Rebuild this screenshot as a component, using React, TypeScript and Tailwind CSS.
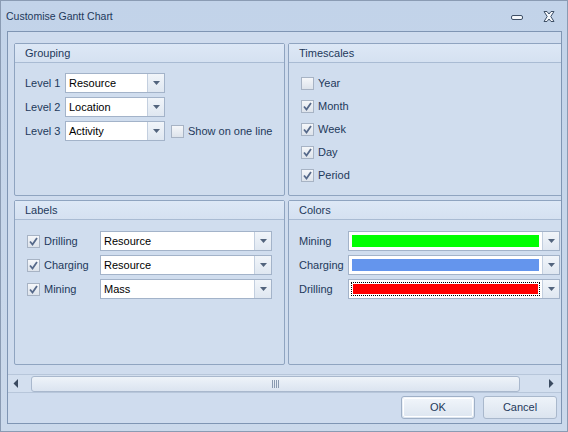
import React from "react";

const FONT = { fontFamily: '"Liberation Sans", Arial, sans-serif' };

function Arrow() {
  return (
    <svg width="7" height="4" viewBox="0 0 7 4">
      <path d="M0 0 H7 L3.5 4 Z" fill="#52647d" />
    </svg>
  );
}

function DropBtn() {
  return (
    <div className="w-[17px] h-full flex items-center justify-center border-l border-[#c3cfdf] bg-gradient-to-b from-[#f1f5fa] to-[#dfe7f1]">
      <Arrow />
    </div>
  );
}

function Combo({ text, w }: { text: string; w: string }) {
  return (
    <div className={`${w} h-[20px] flex border border-[#a3b3c9] bg-white`}>
      <div className="flex-1 flex items-center pl-[3px] text-[11px] text-black">{text}</div>
      <DropBtn />
    </div>
  );
}

function Check({ checked }: { checked: boolean }) {
  return (
    <div className="w-[13px] h-[13px] border border-[#a7b3c4] bg-gradient-to-b from-[#f5f7fa] to-[#dde3eb] flex items-center justify-center">
      {checked && (
        <svg width="9" height="9" viewBox="0 0 9 9">
          <path d="M1 4.5 L3.5 7.5 L8 1" fill="none" stroke="#56698a" strokeWidth="1.8" />
        </svg>
      )}
    </div>
  );
}

function GroupBox({ title, className, children }: { title: string; className: string; children?: React.ReactNode }) {
  return (
    <div className={`${className} border border-[#8fa4c0] rounded-[2px] bg-[#d0ddee] flex flex-col shrink-0`}>
      <div className="h-[19px] border-b border-[#a9bbd3] bg-gradient-to-b from-[#dde8f6] to-[#d5e1f1] flex items-center pl-[10px] text-[11px] text-[#1e395b]">
        {title}
      </div>
      {children}
    </div>
  );
}

function ColorCombo({ color, focused }: { color: string; focused?: boolean }) {
  return (
    <div className="w-[212px] h-[20px] flex border border-[#a3b3c9] bg-white shrink-0">
      <div className="flex-1 p-[2px]">
        <div className={`w-full h-full p-[1px] ${focused ? "border border-dotted border-black" : ""}`}>
          <div className="w-full h-full" style={{ background: color }} />
        </div>
      </div>
      <DropBtn />
    </div>
  );
}

export default function App() {
  const labelCls = "text-[11px] text-[#1e395b]";
  return (
    <div className="w-[568px] h-[432px] bg-gradient-to-b from-[#c2d3e9] to-[#cbd9eb] border border-[#8a9bb3] flex flex-col overflow-hidden" style={FONT}>
      {/* title bar */}
      <div className="h-[30px] shrink-0 flex items-center pl-[5px] pr-[12px]">
        <div className="text-[10.5px] text-[#1e395b] flex-1 pt-[2px]">Customise Gantt Chart</div>
        <svg width="12" height="6" viewBox="0 0 12 6" className="mr-[20px] mt-[3px]">
          <rect x="0.5" y="0.5" width="11" height="4" rx="1.5" fill="#f4f7fb" stroke="#3e4f66" />
        </svg>
        <svg width="12" height="11" viewBox="0 0 12 11">
          <path d="M1 0.5 H4 L6 3 L8 0.5 H11 L7.8 5.5 L11 10.5 H8 L6 8 L4 10.5 H1 L4.2 5.5 Z" fill="#f4f7fb" stroke="#3e4f66" strokeWidth="1" strokeLinejoin="round" />
        </svg>
      </div>
      {/* inner frame */}
      <div className="ml-[6px] mr-[5px] h-[393px] border border-[#7f95b3] bg-[#cfdcee] flex flex-col">
        {/* viewport */}
        <div className="h-[342px] overflow-hidden pt-[11px] pl-[6px] flex flex-col gap-[4px]">
          <div className="flex gap-[3px]">
            <GroupBox title="Grouping" className="w-[271px] h-[153px]">
              <div className="flex flex-col gap-[4px] pt-[10px] pl-[10px]">
                {[
                  ["Level 1", "Resource"],
                  ["Level 2", "Location"],
                  ["Level 3", "Activity"],
                ].map(([l, v], i) => (
                  <div key={l} className="flex items-center h-[20px]">
                    <div className={`${labelCls} w-[40px]`}>{l}</div>
                    <Combo text={v} w="w-[100px]" />
                    {i === 2 && (
                      <div className="flex items-center ml-[6px] gap-[4px]">
                        <Check checked={false} />
                        <span className={labelCls}>Show on one line</span>
                      </div>
                    )}
                  </div>
                ))}
              </div>
            </GroupBox>
            <GroupBox title="Timescales" className="w-[290px] h-[153px] ">
              <div className="flex flex-col gap-[10px] pt-[14px] pl-[12px]">
                {[
                  ["Year", false],
                  ["Month", true],
                  ["Week", true],
                  ["Day", true],
                  ["Period", true],
                ].map(([l, c]) => (
                  <div key={l as string} className="flex items-center h-[13px] gap-[4px]">
                    <Check checked={c as boolean} />
                    <span className={labelCls}>{l as string}</span>
                  </div>
                ))}
              </div>
            </GroupBox>
          </div>
          <div className="flex gap-[3px]">
            <GroupBox title="Labels" className="w-[271px] h-[165px]">
              <div className="flex flex-col gap-[4px] pt-[11px] pl-[12px]">
                {[
                  ["Drilling", "Resource"],
                  ["Charging", "Resource"],
                  ["Mining", "Mass"],
                ].map(([l, v]) => (
                  <div key={l} className="flex items-center h-[20px]">
                    <div className="w-[73px] flex items-center gap-[4px]">
                      <Check checked={true} />
                      <span className={labelCls}>{l}</span>
                    </div>
                    <Combo text={v} w="w-[172px]" />
                  </div>
                ))}
              </div>
            </GroupBox>
            <GroupBox title="Colors" className="w-[290px] h-[165px]">
              <div className="flex flex-col gap-[4px] pt-[11px] pl-[10px]">
                {[
                  ["Mining", "#00ff00", false],
                  ["Charging", "#6495ed", false],
                  ["Drilling", "#ff0000", true],
                ].map(([l, c, f]) => (
                  <div key={l as string} className="flex items-center h-[20px]">
                    <div className={`${labelCls} w-[49px]`}>{l as string}</div>
                    <ColorCombo color={c as string} focused={f as boolean} />
                  </div>
                ))}
              </div>
            </GroupBox>
          </div>
        </div>
        {/* scrollbar */}
        <div className="h-[19px] border-t border-b border-[#b7c6da] flex items-center px-[4px] bg-[#d3dfef]">
          <svg width="8" height="9" viewBox="0 0 8 9" className="ml-[1px]">
            <path d="M5 0 V9 L0.5 4.5 Z" fill="#3a4a60" />
          </svg>
          <div className="ml-[10px] w-[489px] h-[16px] rounded-[3px] border border-[#a9b8cd] bg-gradient-to-b from-[#eef3f9] to-[#dbe4f0] flex items-center justify-center">
            <svg width="7" height="8" viewBox="0 0 7 8">
              <path d="M0.5 0 V8 M2.5 0 V8 M4.5 0 V8 M6.5 0 V8" stroke="#8a9ab0" strokeWidth="1" />
            </svg>
          </div>
          <div className="flex-1" />
          <svg width="8" height="9" viewBox="0 0 8 9" className="mr-[3px]">
            <path d="M3 0 V9 L7.5 4.5 Z" fill="#3a4a60" />
          </svg>
        </div>
        {/* buttons */}
        <div className="flex-1 flex justify-end items-start pt-[3px] pr-[4px] gap-[8px]">
          <div className="w-[74px] h-[23px] rounded-[3px] border border-[#9fb0c7] bg-gradient-to-b from-[#f2f6fb] to-[#dce5f0] p-[1px]">
            <div className="w-full h-full rounded-[2px] border border-white flex items-center justify-center text-[11px] text-[#1e395b]">OK</div>
          </div>
          <div className="w-[74px] h-[23px] rounded-[3px] border border-[#a9b8cc] bg-gradient-to-b from-[#eef3f9] to-[#dbe4ef] flex items-center justify-center text-[11px] text-[#1e395b]">Cancel</div>
        </div>
      </div>
    </div>
  );
}
